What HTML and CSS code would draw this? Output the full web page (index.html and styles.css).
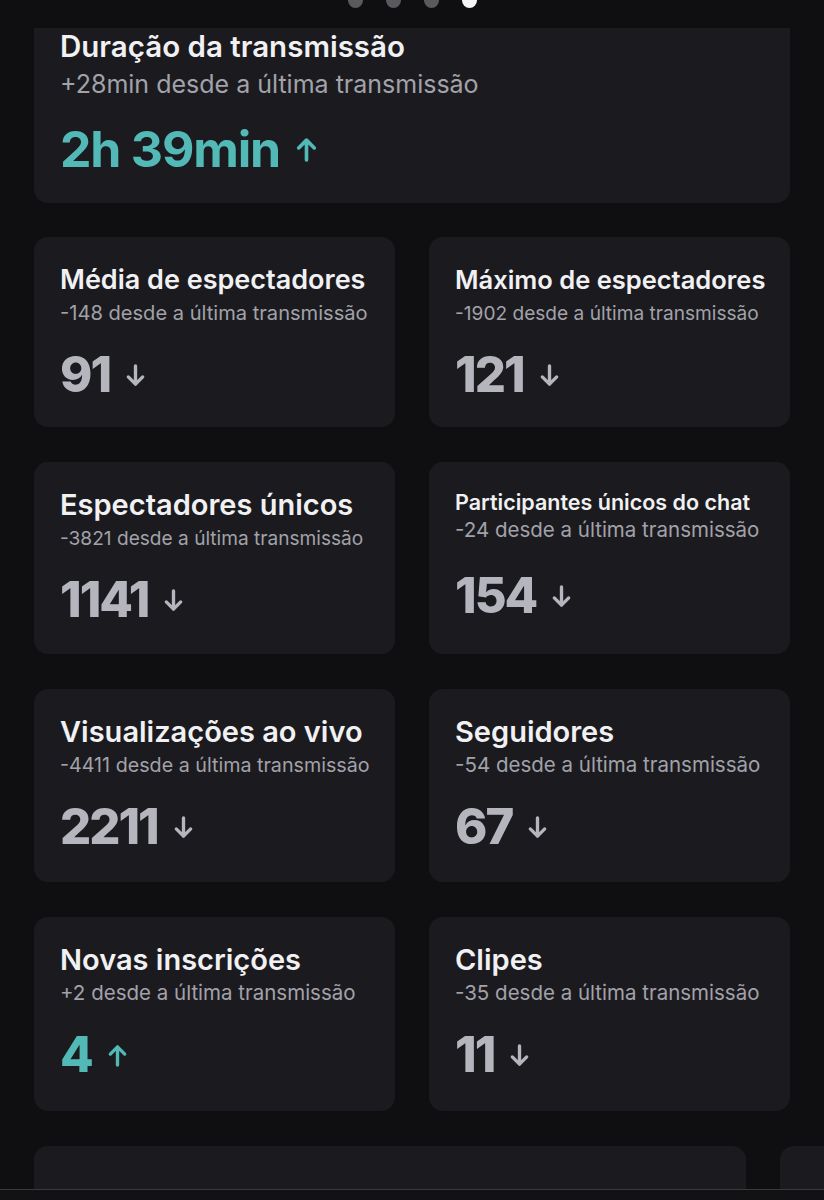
FILE: index.html
```
<!DOCTYPE html>
<html lang="pt-BR">
<head>
    <meta charset="UTF-8">
    <meta name="viewport" content="width=device-width, initial-scale=1.0">
    <title>Resumo da transmissão</title>
    <link rel="stylesheet" href="styles.css">
</head>
<body>
    <div class="pager">
        <span class="dot"></span>
        <span class="dot"></span>
        <span class="dot"></span>
        <span class="dot active"></span>
    </div>

    <div class="scroller">
        <div class="content">
            <div class="card wide">
                <h3 class="title">Duração da transmissão</h3>
                <p class="delta">+28min desde a última transmissão</p>
                <div class="value up">2h 39min
                    <svg class="arrow" viewBox="0 0 24 24"><path d="M12 22V3M4.5 10.5L12 3l7.5 7.5"/></svg>
                </div>
            </div>

            <div class="grid">
                <div class="card">
                    <h3 class="title fit-1">Média de espectadores</h3>
                    <p class="delta fit-3">-148 desde a última transmissão</p>
                    <div class="value">91
                        <svg class="arrow" viewBox="0 0 24 24"><path d="M12 2v19M4.5 13.5L12 21l7.5-7.5"/></svg>
                    </div>
                </div>
                <div class="card">
                    <h3 class="title fit-2">Máximo de espectadores</h3>
                    <p class="delta fit-1">-1902 desde a última transmissão</p>
                    <div class="value">121
                        <svg class="arrow" viewBox="0 0 24 24"><path d="M12 2v19M4.5 13.5L12 21l7.5-7.5"/></svg>
                    </div>
                </div>
                <div class="card">
                    <h3 class="title">Espectadores únicos</h3>
                    <p class="delta fit-1">-3821 desde a última transmissão</p>
                    <div class="value">1141
                        <svg class="arrow" viewBox="0 0 24 24"><path d="M12 2v19M4.5 13.5L12 21l7.5-7.5"/></svg>
                    </div>
                </div>
                <div class="card">
                    <h3 class="title small">Participantes únicos do chat</h3>
                    <p class="delta">-24 desde a última transmissão</p>
                    <div class="value">154
                        <svg class="arrow" viewBox="0 0 24 24"><path d="M12 2v19M4.5 13.5L12 21l7.5-7.5"/></svg>
                    </div>
                </div>
                <div class="card">
                    <h3 class="title">Visualizações ao vivo</h3>
                    <p class="delta fit-2">-4411 desde a última transmissão</p>
                    <div class="value">2211
                        <svg class="arrow" viewBox="0 0 24 24"><path d="M12 2v19M4.5 13.5L12 21l7.5-7.5"/></svg>
                    </div>
                </div>
                <div class="card">
                    <h3 class="title">Seguidores</h3>
                    <p class="delta">-54 desde a última transmissão</p>
                    <div class="value">67
                        <svg class="arrow" viewBox="0 0 24 24"><path d="M12 2v19M4.5 13.5L12 21l7.5-7.5"/></svg>
                    </div>
                </div>
                <div class="card">
                    <h3 class="title">Novas inscrições</h3>
                    <p class="delta">+2 desde a última transmissão</p>
                    <div class="value up">4
                        <svg class="arrow" viewBox="0 0 24 24"><path d="M12 22V3M4.5 10.5L12 3l7.5 7.5"/></svg>
                    </div>
                </div>
                <div class="card">
                    <h3 class="title">Clipes</h3>
                    <p class="delta">-35 desde a última transmissão</p>
                    <div class="value">11
                        <svg class="arrow" viewBox="0 0 24 24"><path d="M12 2v19M4.5 13.5L12 21l7.5-7.5"/></svg>
                    </div>
                </div>
            </div>

            <div class="carousel">
                <div class="slide"></div>
                <div class="slide"></div>
            </div>
        </div>
    </div>

    <div class="bottom-bar"></div>
</body>
</html>
```

FILE: styles.css
```
body {
    margin: 0;
    height: 1200px;
    overflow: hidden;
    background-color: #0f0f11;
    font-family: Inter, "Noto Sans", sans-serif;
    color: #f1f1f3;
}
.pager {
    height: 28px;
    display: flex;
    justify-content: center;
    gap: 23px;
}
.dot {
    width: 15px;
    height: 15px;
    margin-top: -7px;
    border-radius: 50%;
    background-color: #5a5a5e;
}
.dot.active {
    background-color: #f4f4f6;
}
.scroller {
    height: 1161px;
    overflow: hidden;
}
.content {
    padding: 0 34px;
}
.card {
    background-color: #1b1b1f;
    border-radius: 14px;
    padding: 25px 26px 0;
    box-sizing: border-box;
}

.title {
    margin: 0;
    font-size: 29px;
    font-weight: 600;
    line-height: 36px;
    white-space: nowrap;
}
.title.fit-1 {
    font-size: 27px;
}
.title.fit-2 {
    font-size: 25.5px;
}
.title.small {
    font-size: 21.5px;
    line-height: 30px;
}
.delta {
    margin: 1px 0 0;
    font-size: 20.5px;
    line-height: 28px;
    color: #a2a2aa;
    white-space: nowrap;
}
.delta.fit-1 {
    font-size: 19.1px;
}
.delta.fit-2 {
    font-size: 19.7px;
}
.delta.fit-3 {
    font-size: 20.1px;
}
.small + .delta {
    margin-top: -1px;
}
.value {
    margin-top: 20px;
    font-size: 49px;
    font-weight: 800;
    line-height: 56px;
    letter-spacing: -2px;
    color: #b5b5bd;
    display: flex;
    align-items: center;
    gap: 14px;
}
.small ~ .value {
    margin-top: 24px;
}
.value.up {
    color: #52b9b6;
}
.arrow {
    width: 23px;
    height: 23px;
    fill: none;
    stroke: currentColor;
    stroke-width: 3.5;
    stroke-linecap: round;
    stroke-linejoin: round;
}

.card.wide {
    height: 175px;
    padding-top: 0;
    border-radius: 0 0 14px 14px;
}
.wide .title {
    font-size: 29.5px;
}
.wide .delta {
    margin-top: 4px;
    font-size: 25px;
    line-height: 32px;
}
.wide .value {
    margin-top: 21px;
    font-size: 50px;
    font-weight: 700;
    letter-spacing: -1.2px;
    gap: 14px;
}
.wide .arrow {
    width: 25px;
    height: 25px;
}
.grid {
    margin-top: 34px;
    display: grid;
    grid-template-columns: 361px 361px;
    grid-template-rows: 190px 192px 193px 194px;
    column-gap: 34px;
    row-gap: 35px;
}
.carousel {
    margin-top: 35px;
    display: flex;
    gap: 34px;
}
.slide {
    flex: 0 0 712px;
    height: 120px;
    background-color: #1b1b1f;
    border-radius: 14px;
}
.bottom-bar {
    height: 11px;
    border-top: 1px solid #3a3a3e;
    background-color: #121214;
}
```
